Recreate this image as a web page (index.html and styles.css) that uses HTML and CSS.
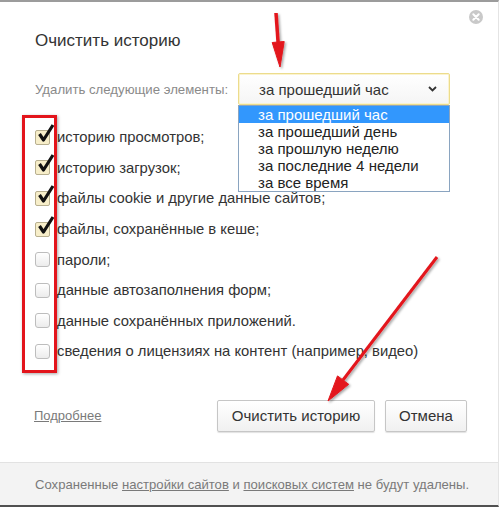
FILE: index.html
```
<!DOCTYPE html>
<html lang="ru">
<head>
    <meta charset="UTF-8">
    <meta name="viewport" content="width=device-width, initial-scale=1.0">
    <title>Очистить историю</title>
    <link rel="stylesheet" href="styles.css">
</head>
<body>
    <div class="dialog">
        <button class="close" type="button" aria-label="Закрыть">
            <svg width="14" height="14" viewBox="0 0 14 14">
                <circle cx="7" cy="7" r="7" fill="#c9c9c9"/>
                <path d="M4.3 4.3 L9.7 9.7 M9.7 4.3 L4.3 9.7" stroke="#fff" stroke-width="2" stroke-linecap="round"/>
            </svg>
        </button>

        <h1 class="title">Очистить историю</h1>

        <div class="period">
            <span class="period-label">Удалить следующие элементы:</span>
            <div class="select-wrap">
                <div class="select">
                    <span>за прошедший час</span>
                    <svg class="chevron" width="9" height="6" viewBox="0 0 9 6">
                        <path d="M1 1 L4.5 4.5 L8 1" fill="none" stroke="#333" stroke-width="1.8"/>
                    </svg>
                </div>
                <ul class="dropdown">
                    <li class="active">за прошедший час</li>
                    <li>за прошедший день</li>
                    <li>за прошлую неделю</li>
                    <li>за последние 4 недели</li>
                    <li>за все время</li>
                </ul>
            </div>
        </div>

        <ul class="items">
            <li><span class="box checked"></span>историю просмотров;</li>
            <li><span class="box checked"></span>историю загрузок;</li>
            <li><span class="box checked"></span>файлы cookie и другие данные сайтов;</li>
            <li><span class="box checked"></span>файлы, сохранённые в кеше;</li>
            <li><span class="box"></span>пароли;</li>
            <li><span class="box"></span>данные автозаполнения форм;</li>
            <li><span class="box"></span>данные сохранённых приложений.</li>
            <li><span class="box"></span>сведения о лицензиях на контент (например, видео)</li>
        </ul>

        <div class="actions">
            <a class="more" href="#">Подробнее</a>
            <div class="buttons">
                <button class="btn btn-clear" type="button">Очистить историю</button>
                <button class="btn btn-cancel" type="button">Отмена</button>
            </div>
        </div>

        <div class="footer">
            Сохраненные <a href="#">настройки сайтов</a> и <a href="#">поисковых систем</a> не будут удалены.
        </div>

        <!-- red annotation frame and arrows drawn over the dialog -->
        <div class="marker-box"></div>
        <svg class="arrows" width="499" height="507" viewBox="0 0 499 507">
            <defs>
                <filter id="shadow" x="-20%" y="-20%" width="140%" height="140%">
                    <feDropShadow dx="1.5" dy="1.5" stdDeviation="1.2" flood-color="#000" flood-opacity="0.35"/>
                </filter>
            </defs>
            <g filter="url(#shadow)" fill="#e3141b" stroke="#e3141b">
                <line x1="276" y1="13" x2="278.2" y2="44" stroke-width="3.5"/>
                <polygon points="272.2,42.5 284.2,41.5 280,67" stroke-width="1"/>
                <line x1="437" y1="257" x2="343" y2="380" stroke-width="3"/>
                <polygon points="348.7,384.3 337.5,375.9 328,401" stroke-width="1"/>
            </g>
        </svg>
    </div>
</body>
</html>
```

FILE: styles.css
```
body {
    margin: 0;
    background: #fff;
    font-family: "Liberation Sans", Arial, sans-serif;
    color: #333;
}
.dialog {
    position: relative;
    width: 499px;
    height: 507px;
    box-sizing: border-box;
    border-top: 2px solid #9c9c9c;
    border-bottom: 2px solid #505050;
    border-right: 1px solid #e4e4e4;
    display: flex;
    flex-direction: column;
    overflow: hidden;
}
.close {
    position: absolute;
    top: 8px;
    right: 15px;
    padding: 0;
    border: none;
    background: none;
    line-height: 0;
}
.title {
    margin: 29px 0 0 35px;
    font-size: 17px;
    line-height: 20px;
    font-weight: normal;
    color: #333;
}
/* period select */
.period {
    display: flex;
    align-items: center;
    gap: 10px;
    margin: 22px 0 0 35px;
}
.period-label {
    font-size: 13.2px;
    color: #8a8a8a;
}
.select-wrap {
    position: relative;
}
.select {
    width: 212px;
    height: 32px;
    box-sizing: border-box;
    display: flex;
    align-items: center;
    justify-content: space-between;
    padding: 0 12px 0 20px;
    border: 1px solid #ecdc8c;
    box-shadow: inset 0 0 0 1px #fbf3cf;
    border-radius: 2px;
    background: linear-gradient(#fff, #f5f5f5);
    font-size: 15px;
    color: #333;
}
.dropdown {
    position: absolute;
    top: 100%;
    left: 0;
    width: 212px;
    box-sizing: border-box;
    margin: 0;
    padding: 0;
    list-style: none;
    background: #fff;
    border: 1px solid #8aa4c0;
    font-size: 15px;
    color: #222;
    z-index: 2;
}
.dropdown li {
    height: 17px;
    line-height: 17px;
    padding-left: 19px;
}
.dropdown li.active {
    background: #3297fd;
    color: #fff;
}
/* checklist */
.items {
    margin: 17px 0 0;
    padding: 0 0 0 35px;
    list-style: none;
}
.items li {
    display: flex;
    align-items: center;
    gap: 7px;
    height: 30.6px;
    font-size: 14.8px;
    color: #333;
}
.box {
    position: relative;
    flex: none;
    width: 15px;
    height: 15px;
    box-sizing: border-box;
    border: 1px solid #bdbdbd;
    border-radius: 3px;
    background: linear-gradient(#fff, #ececec);
}
.box.checked {
    border-color: #b8b090;
    border-radius: 2px;
    background: #f7eec9;
}
.box.checked::after {
    content: '';
    position: absolute;
    left: 1px;
    top: -8px;
    width: 18px;
    height: 20px;
    background: url("data:image/svg+xml,%3Csvg xmlns='http://www.w3.org/2000/svg' width='18' height='20' viewBox='0 0 18 20'%3E%3Cpath d='M2.5 11 L6.5 17 L16 2' fill='none' stroke='%23111' stroke-width='3.2' stroke-linejoin='round'/%3E%3C/svg%3E") no-repeat;
}
/* bottom actions */
.actions {
    display: flex;
    align-items: center;
    justify-content: space-between;
    margin: 33px 31px 0 34px;
}
.more {
    font-size: 13px;
    color: #7a7a7a;
}
.buttons {
    display: flex;
    gap: 10px;
}
.btn {
    height: 32px;
    box-sizing: border-box;
    border: 1px solid #c6c6c6;
    border-radius: 2px;
    background: linear-gradient(#fff, #f0f0f0);
    box-shadow: 0 1px 1px rgba(0, 0, 0, 0.12);
    font-family: inherit;
    font-size: 15px;
    color: #333;
}
.btn-clear {
    width: 158px;
}
.btn-cancel {
    width: 82px;
}
.footer {
    margin-top: auto;
    height: 43px;
    box-sizing: border-box;
    padding-left: 35px;
    border-top: 1px solid #e2e2e2;
    background: #f3f3f3;
    font-size: 13.1px;
    line-height: 43px;
    color: #7a7a7a;
    white-space: nowrap;
}
.footer a {
    color: #7a7a7a;
}
.marker-box {
    position: absolute;
    left: 22px;
    top: 113px;
    width: 35px;
    height: 258px;
    box-sizing: border-box;
    border: 3px solid #e3141b;
    box-shadow: 1px 1px 3px rgba(0, 0, 0, 0.35);
    pointer-events: none;
}
.arrows {
    position: absolute;
    top: -2px;
    left: 0;
    pointer-events: none;
    z-index: 3;
}
```
